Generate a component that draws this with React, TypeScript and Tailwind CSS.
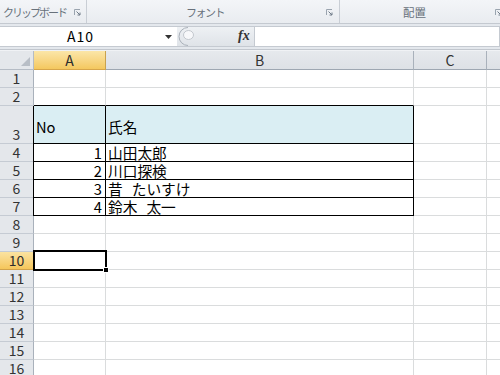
import React from 'react';

const FONT = "font-['Noto_Sans_CJK_JP','Noto_Sans',sans-serif]";

function Launcher() {
  return (
    <svg width="7" height="7" viewBox="0 0 7 7" className="shrink-0">
      <path d="M0.5 6V0.5H6" fill="none" stroke="#9aa4af" strokeWidth="1" />
      <path d="M2.5 2.5L6 6M6 3.5V6H3.5" fill="none" stroke="#6f7b88" strokeWidth="1" />
    </svg>
  );
}

type Cell = { text?: string; align?: 'left' | 'right' };

const rows: { n: number; h: string; cells: Record<string, Cell> }[] = [
  { n: 1, h: 'h-[18px]', cells: {} },
  { n: 2, h: 'h-[18px]', cells: {} },
  { n: 3, h: 'h-[38px]', cells: { A: { text: 'No', align: 'left' }, B: { text: '氏名', align: 'left' } } },
  { n: 4, h: 'h-[18px]', cells: { A: { text: '1', align: 'right' }, B: { text: '山田太郎', align: 'left' } } },
  { n: 5, h: 'h-[18px]', cells: { A: { text: '2', align: 'right' }, B: { text: '川口探検', align: 'left' } } },
  { n: 6, h: 'h-[18px]', cells: { A: { text: '3', align: 'right' }, B: { text: '昔　たいすけ', align: 'left' } } },
  { n: 7, h: 'h-[18px]', cells: { A: { text: '4', align: 'right' }, B: { text: '鈴木　太一', align: 'left' } } },
  { n: 8, h: 'h-[18px]', cells: {} },
  { n: 9, h: 'h-[18px]', cells: {} },
  { n: 10, h: 'h-[18px]', cells: {} },
  { n: 11, h: 'h-[18px]', cells: {} },
  { n: 12, h: 'h-[18px]', cells: {} },
  { n: 13, h: 'h-[18px]', cells: {} },
  { n: 14, h: 'h-[18px]', cells: {} },
  { n: 15, h: 'h-[18px]', cells: {} },
  { n: 16, h: 'h-[18px]', cells: {} },
];

const colW: Record<string, string> = {
  A: 'w-[72px]',
  B: 'w-[308px]',
  C: 'w-[73px]',
  D: 'w-[60px]',
};

function CellText({ text }: { text: string }) {
  const parts = text.split('　');
  return (
    <span className="text-[14.7px] leading-[17px] text-black whitespace-pre">
      {parts.map((p, i) => (
        <React.Fragment key={i}>
          {i > 0 && <span className="inline-block w-[9px] overflow-hidden align-bottom">　</span>}
          {p}
        </React.Fragment>
      ))}
    </span>
  );
}

function GridCell({ row, col }: { row: number; col: string }) {
  const inTable = (col === 'A' || col === 'B') && row >= 3 && row <= 7;
  const topOfTable = (col === 'A' || col === 'B') && row === 2;
  const bottomBlack = inTable || topOfTable;
  const rightBlack = inTable;
  const data = rows.find((r) => r.n === row)!.cells[col];
  const isHeader = row === 3 && inTable;
  const cls = [
    'relative shrink-0 h-full border-r border-b flex',
    colW[col],
    bottomBlack ? 'border-b-black' : 'border-b-[#dadcdd]',
    rightBlack ? 'border-r-black' : 'border-r-[#dadcdd]',
    isHeader ? 'bg-[#daeef3] items-center pt-[3px]' : 'bg-white items-end',
    inTable && col === 'A' ? 'shadow-[-1px_0_0_#000]' : '',
    data?.align === 'right' ? 'justify-end pr-[3px]' : 'justify-start pl-[2px]',
  ].join(' ');
  return (
    <div className={cls}>
      {data?.text && <CellText text={data.text} />}
      {row === 10 && col === 'A' && (
        <>
          <div className="absolute z-10 -left-[1px] -top-[2px] w-[74px] h-[21px] border-2 border-black pointer-events-none" />
          <div className="absolute z-20 left-[69px] top-[15px] w-[6px] h-[6px] bg-black border border-white pointer-events-none" />
        </>
      )}
    </div>
  );
}

export default function App() {
  return (
    <div className={`w-[500px] h-[375px] overflow-hidden bg-white ${FONT}`}>
      {/* Ribbon group labels */}
      <div className="h-[24px] flex bg-gradient-to-b from-[#f3f5f8] to-[#e9ecf0] border-b border-[#c4c9d0] text-[11px] text-[#68717b]">
        <div className="w-[87px] shrink-0 flex items-center border-r border-[#c9ced5] pl-[3px] pr-[5px] pt-[2px]">
          <span className="leading-none tracking-[-2px] flex-1 whitespace-nowrap">クリップボード</span>
          <Launcher />
        </div>
        <div className="w-[253px] shrink-0 flex items-center border-r border-[#c9ced5] pr-[6px] pt-[2px]">
          <span className="leading-none pl-[99px] flex-1 tracking-[-1.5px] whitespace-nowrap">フォント</span>
          <Launcher />
        </div>
        <div className="flex-1 flex items-center pt-[2px]">
          <span className="leading-none pl-[63px] flex-1 text-[11.5px]">配置</span>
          <div className="mr-[-2px]">
            <Launcher />
          </div>
        </div>
      </div>

      {/* Formula bar */}
      <div className="h-[26px] bg-[#e4e8ed] flex items-start pt-[2px] border-b border-[#c2c7ce]">
        <div className="w-[177px] h-[21px] shrink-0 bg-white border-y border-[#c5cad1] flex items-center relative">
          <span className="absolute left-[67px] top-[0px] text-[14px] leading-[19px] text-black tracking-[1px]">A10</span>
          <svg width="7" height="4" viewBox="0 0 7 4" className="absolute left-[165px] top-[8px]">
            <path d="M0 0H7L3.5 4Z" fill="#333" />
          </svg>
        </div>
        <div className="w-[77px] h-[21px] shrink-0 bg-gradient-to-b from-[#eef1f4] to-[#dfe3e8] border-y border-[#c5cad1] relative flex items-center">
          <svg width="17" height="19" viewBox="0 0 17 19" className="absolute left-[1px] top-[0px]">
            <path d="M10 0.5A8.5 8.5 0 0 0 10 18.5" fill="none" stroke="#a9b0b9" strokeWidth="1" />
            <ellipse cx="10.5" cy="8" rx="5" ry="4.5" fill="#f7f8fa" stroke="#c3c8ce" strokeWidth="1" />
          </svg>
          <span className="absolute left-[61px] top-[0px] font-['Liberation_Serif',serif] italic font-bold text-[14px] leading-[18px] text-[#333]">fx</span>
        </div>
        <div className="flex-1 h-[21px] bg-white border border-[#c5cad1]" />
      </div>

      {/* Sheet */}
      <div className="pt-[1px] bg-[#f0f2f5]">
        {/* Column headers */}
        <div className="flex h-[19px]">
          <div className="w-[34px] shrink-0 h-full bg-[#e4e7eb] border-r border-b border-[#b5bcc5] relative">
            <svg width="9" height="9" viewBox="0 0 9 9" className="absolute right-[3px] bottom-[3px]">
              <path d="M9 0V9H0Z" fill="#b8bec6" />
            </svg>
          </div>
          {['A', 'B', 'C', 'D'].map((c) => (
            <div
              key={c}
              className={`${colW[c]} shrink-0 h-full border-r border-b flex items-center justify-center text-[14px] leading-none ${
                c === 'A'
                  ? 'bg-gradient-to-b from-[#fbe6a8] to-[#f4c85e] border-r-[#c9a24e] border-b-[#d7a64a] text-[#2d2d2d]'
                  : 'bg-gradient-to-b from-[#e6e9ed] to-[#dde1e6] border-r-[#a9b1bb] border-b-[#9ea7b2] text-[#333]'
              }`}
            >
              {c === 'D' ? '' : c}
            </div>
          ))}
        </div>
        {/* Rows */}
        {rows.map((r) => (
          <div key={r.n} className={`flex ${r.h}`}>
            <div
              className={`w-[34px] shrink-0 h-full border-r border-b flex items-end justify-center pb-[1px] text-[14px] leading-[16px] ${
                r.n === 10
                  ? 'bg-gradient-to-b from-[#fbe3a0] to-[#f5c65a] border-r-[#d1a24a] border-b-[#d1a24a] text-[#2d2d2d]'
                  : 'bg-[#e4e7eb] border-r-[#a9b1bb] border-b-[#c5cbd3] text-[#333]'
              }`}
            >
              {r.n}
            </div>
            {['A', 'B', 'C', 'D'].map((c) => (
              <GridCell key={c} row={r.n} col={c} />
            ))}
          </div>
        ))}
      </div>
    </div>
  );
}
